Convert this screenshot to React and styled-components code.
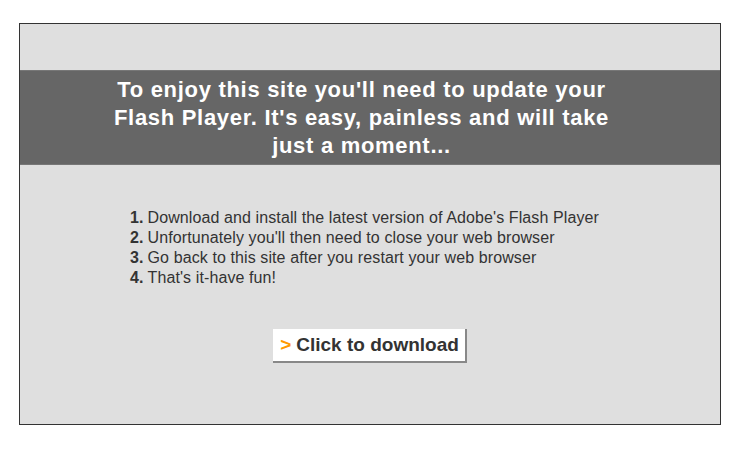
import styled, { createGlobalStyle } from "styled-components";

const GlobalStyle = createGlobalStyle`
  body {
    margin: 0;
    background: #fff;
    font-family: "Liberation Sans", Arial, sans-serif;
  }
`;

const Page = styled.div`
  padding: 23px 0 0 19px;
`;

const Box = styled.div`
  width: 700px;
  height: 354px;
  border: 1px solid #333;
  background: #dfdfdf;
  padding-top: 46px;
`;

const Banner = styled.div`
  background: #666;
  border-top: 1px solid #777;
  border-bottom: 1px solid #777;
  height: 93px;
  display: flex;
  align-items: center;
  justify-content: center;
`;

const Headline = styled.h1`
  margin: 1px 17px 0 0;
  width: 505px;
  color: #fff;
  font-size: 22px;
  font-weight: bold;
  letter-spacing: 0.7px;
  line-height: 28px;
  text-align: center;
`;

const Steps = styled.ol`
  list-style: none;
  margin: 43px 0 0 110px;
  padding: 0;
  color: #333;
  font-size: 16px;
  letter-spacing: 0.1px;
  line-height: 20px;
`;

const Step = styled.li`
  b {
    margin-right: 4px;
  }
`;

const Actions = styled.div`
  display: flex;
  justify-content: center;
  margin-top: 41px;
`;

const DownloadButton = styled.button`
  background: #fff;
  border: none;
  border-right: 2px solid #888;
  border-bottom: 2px solid #888;
  padding: 0 6px 0 7px;
  height: 34px;
  font-family: "Liberation Sans", Arial, sans-serif;
  font-size: 19px;
  font-weight: bold;
  color: #333;
  cursor: pointer;

  span {
    color: #f90;
    margin-right: 5px;
  }
`;

const steps = [
  "Download and install the latest version of Adobe's Flash Player",
  "Unfortunately you'll then need to close your web browser",
  "Go back to this site after you restart your web browser",
  "That's it-have fun!",
];

export default function App() {
  return (
    <>
      <GlobalStyle />
      <Page>
        <Box>
          <Banner>
            <Headline>
              To enjoy this site you'll need to update your Flash Player. It's
              easy, painless and will take just a moment...
            </Headline>
          </Banner>
          <Steps>
            {steps.map((s, i) => (
              <Step key={i}>
                <b>{i + 1}.</b>
                {s}
              </Step>
            ))}
          </Steps>
          <Actions>
            <DownloadButton>
              <span>&gt;</span>Click to download
            </DownloadButton>
          </Actions>
        </Box>
      </Page>
    </>
  );
}
